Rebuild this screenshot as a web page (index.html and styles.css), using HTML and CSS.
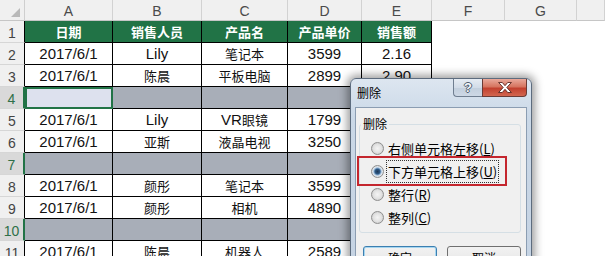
FILE: index.html
```html
<!DOCTYPE html>
<html lang="zh">
<head>
<meta charset="utf-8">
<title>删除</title>
<link rel="stylesheet" href="styles.css">
</head>
<body>
<div class="sheet">
  <div class="corner"><svg width="9" height="9" viewBox="0 0 9 9"><polygon points="9,0 9,9 0,9" fill="#b9b9b9"/></svg></div>
  <div class="ch">A</div><div class="ch">B</div><div class="ch">C</div><div class="ch">D</div><div class="ch">E</div><div class="ch">F</div><div class="ch">G</div><div class="ch"></div>

  <div class="rh">1</div>
  <div class="c hd">日期</div><div class="c hd">销售人员</div><div class="c hd">产品名</div><div class="c hd">产品单价</div><div class="c hd">销售额</div>
  <div class="e"></div><div class="e"></div><div class="e"></div>

  <div class="rh">2</div>
  <div class="c">2017/6/1</div><div class="c">Lily</div><div class="c zh">笔记本</div><div class="c">3599</div><div class="c">2.16</div>
  <div class="e"></div><div class="e"></div><div class="e"></div>

  <div class="rh">3</div>
  <div class="c">2017/6/1</div><div class="c zh">陈晨</div><div class="c zh">平板电脑</div><div class="c">2899</div><div class="c">2.90</div>
  <div class="e"></div><div class="e"></div><div class="e"></div>

  <div class="rh sel">4</div>
  <div class="c act"></div><div class="c g"></div><div class="c g"></div><div class="c g"></div><div class="c g"></div>
  <div class="e"></div><div class="e"></div><div class="e"></div>

  <div class="rh">5</div>
  <div class="c">2017/6/1</div><div class="c">Lily</div><div class="c">VR<span class="zh">眼镜</span></div><div class="c">1799</div><div class="c"></div>
  <div class="e"></div><div class="e"></div><div class="e"></div>

  <div class="rh">6</div>
  <div class="c">2017/6/1</div><div class="c zh">亚斯</div><div class="c zh">液晶电视</div><div class="c">3250</div><div class="c"></div>
  <div class="e"></div><div class="e"></div><div class="e"></div>

  <div class="rh sel">7</div>
  <div class="c g"></div><div class="c g"></div><div class="c g"></div><div class="c g"></div><div class="c g"></div>
  <div class="e"></div><div class="e"></div><div class="e"></div>

  <div class="rh">8</div>
  <div class="c">2017/6/1</div><div class="c zh">颜彤</div><div class="c zh">笔记本</div><div class="c">3599</div><div class="c"></div>
  <div class="e"></div><div class="e"></div><div class="e"></div>

  <div class="rh">9</div>
  <div class="c">2017/6/1</div><div class="c zh">颜彤</div><div class="c zh">相机</div><div class="c">4890</div><div class="c"></div>
  <div class="e"></div><div class="e"></div><div class="e"></div>

  <div class="rh sel">10</div>
  <div class="c g"></div><div class="c g"></div><div class="c g"></div><div class="c g"></div><div class="c g"></div>
  <div class="e"></div><div class="e"></div><div class="e"></div>

  <div class="rh">11</div>
  <div class="c">2017/6/1</div><div class="c zh">陈晨</div><div class="c zh">机器人</div><div class="c">2589</div><div class="c"></div>
  <div class="e"></div><div class="e"></div><div class="e"></div>
</div>

<div class="dialog">
  <div class="titlebar">
    <span class="title">删除</span>
    <div class="caps">
      <div class="cap help">?</div>
      <div class="cap close"><svg width="14" height="11" viewBox="-0.5 -0.5 15 12"><polygon points="0,0 4,0 7,3.5 10,0 14,0 9,5.5 14,11 10,11 7,7.5 4,11 0,11 5,5.5" fill="#fff" stroke="#5a2620" stroke-width="1" stroke-linejoin="round"/></svg></div>
    </div>
  </div>
  <div class="client">
    <fieldset class="group">
      <legend>删除</legend>
      <div class="opt"><span class="radio"></span><span>右侧单元格左移(<u>L</u>)</span></div>
      <div class="opt"><span class="radio on"></span><span class="focus">下方单元格上移(<u>U</u>)</span></div>
      <div class="opt"><span class="radio"></span><span>整行(<u>R</u>)</span></div>
      <div class="opt"><span class="radio"></span><span>整列(<u>C</u>)</span></div>
    </fieldset>
    <div class="buttons">
      <div class="btn def">确定</div>
      <div class="btn">取消</div>
    </div>
  </div>
  <div class="mark"></div>
</div>
</body>
</html>
```
FILE: styles.css
```css
html, body {
  margin: 0;
  padding: 0;
}
body {
  width: 605px;
  height: 256px;
  overflow: hidden;
  position: relative;
  background: #fff;
  font-family: "Liberation Sans", "Noto Sans CJK SC", sans-serif;
}

.sheet {
  display: grid;
  grid-template-columns: 25px 88px 89px 86px 74px 70px 73px 72px 1fr;
  grid-template-rows: 21px repeat(11, 22px);
}
.sheet > div {
  box-sizing: border-box;
  min-width: 0;
}

.corner {
  background: #f0f0f0;
  border-right: 1px solid #cfcfcf;
  border-bottom: 1px solid #c6c6c6;
  display: flex;
  justify-content: flex-end;
  align-items: flex-end;
  padding: 0 4px 3px 0;
}
.corner svg { display: block; }

.ch {
  background: #f0f0f0;
  border-right: 1px solid #d2d2d2;
  border-bottom: 1px solid #c6c6c6;
  color: #4a4a4a;
  font-size: 14px;
  display: flex;
  align-items: center;
  justify-content: center;
  padding-top: 2px;
}

.rh {
  background: #f0f0f0;
  border-right: 1px solid #000;
  border-bottom: 1px solid #d6d6d6;
  color: #444;
  font-size: 14px;
  display: flex;
  align-items: center;
  justify-content: center;
  padding-top: 2px;
}
.rh.sel {
  background: #d9d9d9;
  color: #2f7048;
  border-right: 2px solid #217346;
}

.c {
  border-right: 1px solid #000;
  border-bottom: 1px solid #000;
  display: flex;
  align-items: center;
  justify-content: center;
  font-size: 15px;
  color: #111;
  white-space: nowrap;
}
.zh, .c.zh {
  font-family: "Noto Sans CJK SC", sans-serif;
  font-size: 13px;
}
.c.hd {
  background: #217346;
  color: #fff;
  font-family: "Noto Sans CJK SC", sans-serif;
  font-size: 13px;
  font-weight: bold;
}
.c.g {
  background: #a8aeb8;
}
.c.act {
  background: #dde1ee;
  border: 2px solid #217346;
}

/* dialog */
.dialog {
  position: absolute;
  left: 350px;
  top: 78px;
  width: 182px;
  height: 200px;
  box-sizing: border-box;
  border: 1px solid #5d6c7e;
  border-radius: 6px 6px 0 0;
  background: linear-gradient(#dde6f0, #cad8e7 40px, #c5d3e3);
  box-shadow: 0 0 9px 3px rgba(0, 0, 0, 0.38);
  display: flex;
  flex-direction: column;
  font-family: "Noto Sans CJK SC", sans-serif;
  color: #000;
}
.titlebar {
  height: 28px;
  flex: none;
  display: flex;
  justify-content: space-between;
  align-items: flex-start;
  padding: 0 4px 0 6px;
}
.title {
  font-size: 12px;
  line-height: 14px;
  margin-top: 7px;
}
.caps {
  display: flex;
}
.cap {
  height: 18px;
  box-sizing: border-box;
  display: flex;
  align-items: center;
  justify-content: center;
}
.help {
  width: 29px;
  border: 1px solid #6f7e90;
  border-top: none;
  border-right: none;
  border-radius: 0 0 0 4px;
  background: linear-gradient(#e6ecf3, #d2dce8 50%, #c2cfdd 51%, #cdd8e5);
  font-family: "Liberation Sans", sans-serif;
  font-weight: bold;
  font-size: 13px;
  color: #f6f8fa;
  text-shadow: 1px 0 0 #4d5b6c, -1px 0 0 #4d5b6c, 0 1px 0 #4d5b6c, 0 -1px 0 #4d5b6c;
}
.close {
  width: 45px;
  border: 1px solid #6a3b35;
  border-top: none;
  border-radius: 0 0 4px 0;
  background: linear-gradient(#e9a99b, #d67560 45%, #c2412f 55%, #d2664f);
}
.close svg { display: block; }

.client {
  flex: 1;
  margin: 0 4px;
  background: #f0f0f0;
  border: 1px solid #8b9db2;
  display: flex;
  flex-direction: column;
}
.group {
  margin: 8px 5px 0 3px;
  padding: 5px 0 3px 1px;
  border: 1px solid #d5dfe5;
  border-radius: 3px;
  min-width: 0;
}
.group legend {
  font-size: 12px;
  line-height: 16px;
  padding: 0 2px;
}
.opt {
  display: flex;
  align-items: center;
  gap: 4px;
  height: 23px;
  padding-left: 10px;
  font-size: 13px;
  white-space: nowrap;
}
.radio {
  width: 13px;
  height: 13px;
  box-sizing: border-box;
  border-radius: 50%;
  border: 1px solid #8f8f8f;
  background: radial-gradient(circle at 50% 50%, #f4f4f4 0, #e2e2e2 4px, #cfcfcf 6px);
  flex: none;
}
.radio.on {
  background: radial-gradient(circle at 50% 50%, #1d3857 0, #2f5a86 2.5px, #8fb3d6 3.6px, #e4e9ee 4.6px, #d0d4d8 6px);
}
.focus {
  outline: 1px dotted #333;
  outline-offset: 1px;
}
.buttons {
  display: flex;
  gap: 10px;
  margin: 13px 0 0 7px;
}
.btn {
  width: 74px;
  height: 23px;
  box-sizing: border-box;
  border: 1px solid #707070;
  border-radius: 3px;
  background: linear-gradient(#f2f2f2 0, #ebebeb 50%, #dddddd 51%, #cfcfcf);
  font-size: 12px;
  display: flex;
  align-items: center;
  justify-content: center;
}
.btn.def {
  border-color: #3c7fb1;
  box-shadow: inset 0 0 0 1px #a6d6f0;
}
.mark {
  position: absolute;
  left: 6px;
  top: 77px;
  width: 150px;
  height: 30px;
  box-sizing: border-box;
  border: 2px solid #c4262e;
}
```
